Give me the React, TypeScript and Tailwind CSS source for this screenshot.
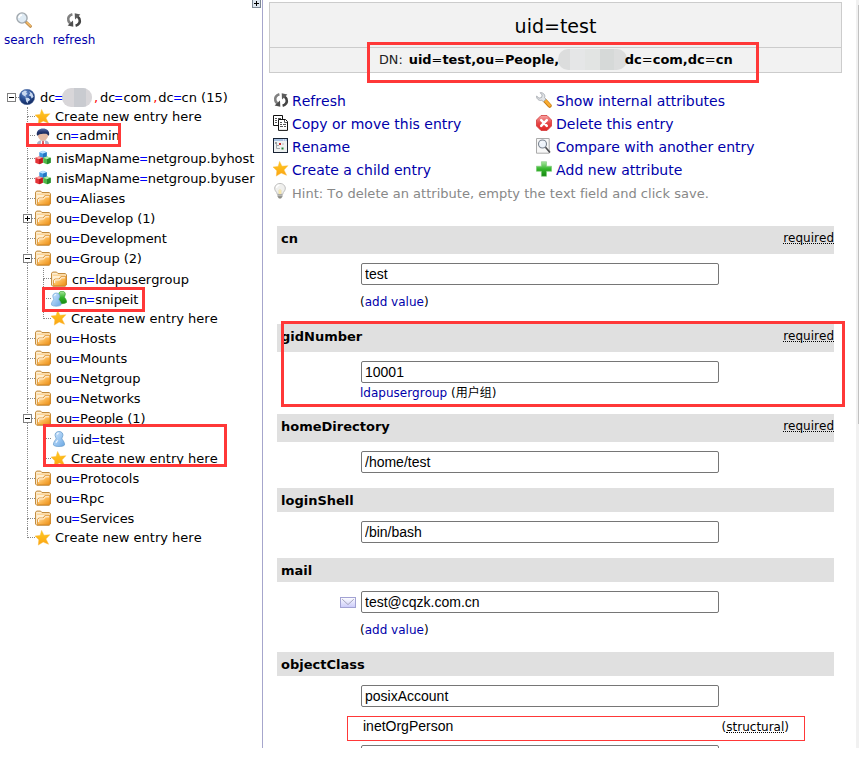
import React from "react";

const sans = "font-['DejaVu_Sans','Noto_Sans_CJK_SC',sans-serif] [font-kerning:none]";

function Svg({ children, w = 16, h = 16 }: { children: React.ReactNode; w?: number; h?: number }) {
  return (
    <svg width={w} height={h} viewBox={`0 0 ${w} ${h}`} className="block shrink-0">
      {children}
    </svg>
  );
}

function Gradients() {
  return (
    <svg width="0" height="0" className="absolute">
      <defs>
        <linearGradient id="orange" x1="0" y1="0" x2="1" y2="1">
          <stop offset="0" stopColor="#fff0d4" />
          <stop offset="0.5" stopColor="#fbb956" />
          <stop offset="1" stopColor="#ea8c12" />
        </linearGradient>
        <linearGradient id="star" x1="0" y1="0" x2="0" y2="1">
          <stop offset="0" stopColor="#ffcb20" />
          <stop offset="1" stopColor="#fba314" />
        </linearGradient>
        <radialGradient id="globe" cx="0.4" cy="0.25" r="0.8">
          <stop offset="0" stopColor="#6f93cf" />
          <stop offset="0.5" stopColor="#2a4f94" />
          <stop offset="1" stopColor="#0f2458" />
        </radialGradient>
        <linearGradient id="hair" x1="0" y1="0" x2="0" y2="1">
          <stop offset="0" stopColor="#5a6ea8" />
          <stop offset="0.5" stopColor="#24356e" />
          <stop offset="1" stopColor="#1b2750" />
        </linearGradient>
        <linearGradient id="blue" x1="0" y1="0" x2="1" y2="1">
          <stop offset="0" stopColor="#d3e9ff" />
          <stop offset="1" stopColor="#6ba8e4" />
        </linearGradient>
        <linearGradient id="green" x1="0" y1="0" x2="0" y2="1">
          <stop offset="0" stopColor="#a9e7a0" />
          <stop offset="0.5" stopColor="#35b52c" />
          <stop offset="1" stopColor="#14870f" />
        </linearGradient>
        <linearGradient id="red" x1="0" y1="0" x2="0" y2="1">
          <stop offset="0" stopColor="#f7a5a5" />
          <stop offset="0.5" stopColor="#e64848" />
          <stop offset="1" stopColor="#e02424" />
        </linearGradient>
        <linearGradient id="mail" x1="0" y1="0" x2="0" y2="1">
          <stop offset="0" stopColor="#ffffff" />
          <stop offset="1" stopColor="#c9c9fa" />
        </linearGradient>
      </defs>
    </svg>
  );
}

const StarIcon = () => (
  <Svg>
    <path d="M6.6.4 9 5.2 14.9 4.7 11 8.9 13.6 14.3 8.2 12.1 3.3 15.1 3.8 9.7 0 6 5.1 5.4Z" fill="url(#star)" stroke="#fbb32a" strokeWidth=".4" />
  </Svg>
);

const FolderIcon = () => (
  <Svg>
    <path d="M.6 14V2.2L1.6 1.1H5.6L7 2.6H14.2L15.4 3.6V14L14.2 15.2H1.7Z" fill="#fff0d4" stroke="#bd822e" />
    <path d="M2 4.2H14" stroke="#fbd190" strokeWidth="1.4" />
    <path d="M2.6 14.7V9.3L3.8 8H8.3L9.8 5.7H15.2V13.8L14 14.7Z" fill="url(#orange)" stroke="#d8871c" strokeWidth=".8" />
    <path d="M3.6 12V9.5L4.4 8.9H8.8L10.3 6.8H14.2" fill="none" stroke="#fff" strokeWidth=".9" />
  </Svg>
);

const GlobeIcon = () => (
  <Svg>
    <circle cx="8" cy="8" r="7.7" fill="url(#globe)" stroke="#49679f" strokeWidth=".5" />
    <path d="M2.7 3.6 5.8 1.5 8 2.2 7.1 3.4 8.5 4.7 6.5 6.4 7.5 8 5.2 7.1 3.2 5.4ZM6.4 8.5 9.7 8.9 11.2 10.7 9 12.5 8.7 14.5 7.2 12.6ZM10.1 2.2 13.2 4.2 14.6 7.8 12.7 9.4 11.5 7 9.7 6.4 11.2 4.5Z" fill="#c9d8ef" />
  </Svg>
);

const AdminIcon = () => (
  <Svg>
    <path d="M2 16C2 13.6 3.8 12.6 6 12.2H10C12.2 12.6 14 13.6 14 16Z" fill="#aab4c8" />
    <path d="M6 12 8 13.8 10 12 10.2 16H5.8Z" fill="#fff" />
    <path d="M7.3 13H8.7L9 16H7Z" fill="#d9464c" />
    <path d="M3 5H13C13.9 9.6 11 12.8 8 12.8S2.1 9.6 3 5Z" fill="#e6bba4" />
    <path d="M1.9 7C1 3 4.2.4 8 .4S15 3 14.1 7L13.2 7.8C12.8 6.2 11.6 5.6 9.6 5.7 7.6 6 4 5.4 2.8 7.8Z" fill="url(#hair)" />
  </Svg>
);

const CubesIcon = () => (
  <Svg>
    <path d="M4.3 2.2 8 .8 11.7 2.2V7L8 8.7 4.3 7Z" fill="#3f98df" />
    <path d="M4.3 2.2 8 3.7 11.7 2.2 8 .8Z" fill="#b8e0ff" />
    <path d="M8 3.7V8.7L11.7 7V2.2Z" fill="#2474c2" />
    <path d="M.3 7.8 4.1 6.4 7.8 7.8V12.8L4.1 14.2 .3 12.8Z" fill="#e43338" />
    <path d="M.3 7.8 4.1 9.3 7.8 7.8 4.1 6.4Z" fill="#f9a2a2" />
    <path d="M4.1 9.3V14.2L7.8 12.8V7.8Z" fill="#bc1922" />
    <path d="M8.2 7.8 12 6.4 15.7 7.8V12.8L12 14.2 8.2 12.8Z" fill="#4fb947" />
    <path d="M8.2 7.8 12 9.3 15.7 7.8 12 6.4Z" fill="#b3edaa" />
    <path d="M12 9.3V14.2L15.7 12.8V7.8Z" fill="#248a29" />
  </Svg>
);

const pawn = "M8 .5C10.8.5 12.2 2.5 11.9 4.5 11.7 6 10.8 6.7 10.9 7.7 11.1 8.7 13.6 10.4 13.6 13.9 12 16 4 16 2.4 13.9 2.4 10.4 4.9 8.7 5.1 7.7 5.2 6.7 4.3 6 4.1 4.5 3.8 2.5 5.2.5 8 .5Z";

const UserIcon = () => (
  <Svg>
    <path d={pawn} fill="url(#blue)" stroke="#6c9fcd" strokeWidth=".8" />
    <path d="M6.2 3.8Q6.2 2 8 2M5 11.8Q5.5 10.2 7 9.5" stroke="#f1f8ff" fill="none" strokeWidth="1.1" />
  </Svg>
);

const GroupIcon = () => (
  <Svg>
    <g transform="translate(4.4 -.2) scale(.83)">
      <path d={pawn} fill="url(#green)" stroke="#2a9d24" strokeWidth=".8" />
    </g>
    <g transform="translate(-1.8 1.6) scale(.88)">
      <path d={pawn} fill="url(#blue)" stroke="#73a6d5" strokeWidth=".8" />
      <path d="M6.2 3.8Q6.2 2 8 2" stroke="#fff" fill="none" />
    </g>
  </Svg>
);

const RefreshIcon = () => (
  <Svg>
    <path d="M6.4 2.3C3 3.2 1.6 5.8 2.4 8.6 2.7 9.8 3.4 10.6 4.4 11.3" fill="none" stroke="#808080" strokeWidth="2.6" />
    <path d="M1.6 13.4 7.3 14.8 7 8.6Z" fill="#4e4e4e" />
    <path d="M9.6 13.7C13 12.8 14.4 10.2 13.6 7.4 13.3 6.2 12.6 5.4 11.6 4.7" fill="none" stroke="#444" strokeWidth="2.6" />
    <path d="M14.4 2.6 8.7 1.2 9 7.4Z" fill="#5c5c5c" />
  </Svg>
);

const SearchIcon = () => (
  <Svg>
    <path d="M10.5 10.5 14.4 14.3" stroke="#b98a4c" strokeWidth="3" strokeLinecap="round" />
    <path d="M11 10.6 14.4 13.9" stroke="#f2b866" strokeWidth="1.7" strokeLinecap="round" />
    <circle cx="6" cy="6" r="5.1" fill="#dfebf4" stroke="#a1a8ae" strokeWidth="1.4" />
    <path d="M3 6Q3 3.2 6 3" fill="none" stroke="#fff" strokeWidth="1.5" />
  </Svg>
);

const CopyIcon = () => (
  <Svg>
    <path d="M.5.5H9.5V10.5H.5Z" fill="#fff" stroke="#111" />
    <path d="M2 3.5H4M5 3.5H8M2 5.5H4M2 7.5H4" stroke="#555" />
    <path d="M5.5 4.5H12.5L14.5 6.5V15.4H5.5Z" fill="#fff" stroke="#111" />
    <path d="M11.5 5V7.5H14M7 7.5H9M7 9.5H9M10 9.5H13M7 11.5H10M11 11.5H13" stroke="#555" fill="none" />
  </Svg>
);

const RenameIcon = () => (
  <Svg>
    <g transform="translate(-1 0)">
      <rect x=".5" y=".5" width="15" height="14" fill="#eef1f1" stroke="#172233" />
      <path d="M1 2H15" stroke="#a9c3e4" strokeWidth="2" />
      <path d="M11 2H12M13 2H14" stroke="#fff" />
      <path d="M4.5 5V10.5H8M4.5 7.5H7" fill="none" stroke="#a5a9ac" />
      <rect x="3" y="4" width="2" height="2" fill="#999fa3" />
      <rect x="7" y="5" width="2" height="2" fill="#c83030" />
      <rect x="9.5" y="9.5" width="2" height="2" fill="#27883c" />
      <path d="M10 6H12" stroke="#bbb" />
      <path d="M1.5 1V14" stroke="#172233" />
    </g>
  </Svg>
);

const BulbIcon = () => (
  <Svg>
    <g transform="translate(-1 0)">
      <path d="M5.2 11.3Q5.1 9.6 3.4 7.8C1.2 4.2 4.3.4 8 .4S14.8 4.2 12.6 7.8Q10.9 9.6 10.8 11.3Z" fill="#efefed" stroke="#b0b0b0" strokeWidth=".8" />
      <path d="M7 11V7.5L8 6.5 9 7.5V11" fill="#fff2bb" stroke="#e1cf8a" strokeWidth=".6" />
      <path d="M5.6 11.5H10.4V13.8L9 15.5H7L5.6 13.8Z" fill="#8c8c86" />
      <path d="M6 12.7H10" stroke="#ddd" strokeWidth=".7" />
      <path d="M4.5 5Q4.7 2.5 7.5 2.2" stroke="#fff" fill="none" strokeWidth="1.3" />
    </g>
  </Svg>
);

const WrenchIcon = () => (
  <Svg>
    <path d="M9.2 8.9 13.6 13.7" stroke="#c67a13" strokeWidth="4.2" strokeLinecap="round" />
    <path d="M9.3 8.7 13.6 13.3" stroke="#f9ad32" strokeWidth="2.7" strokeLinecap="round" />
    <path d="M4.2.7C7 .2 9.6 2.8 8.6 5.6L10 7.2 7.4 9.7 5.7 8.3C3.1 9.1.4 7 .6 4.1L3 6.2 5.6 5.5 6.2 3Z" fill="#e3e5e8" stroke="#9a9fa6" strokeWidth=".8" />
  </Svg>
);

const DeleteIcon = () => (
  <Svg>
    <path d="M5 .5H11L15.5 5V11L11 15.5H5L.5 11V5Z" fill="url(#red)" stroke="#d43a3a" strokeWidth=".8" />
    <path d="M5.2 5.2 10.8 10.8M10.8 5.2 5.2 10.8" stroke="#fff" strokeWidth="2.5" strokeLinecap="round" />
  </Svg>
);

const CompareIcon = () => (
  <Svg>
    <path d="M.5.5H13.2V15.2H.5Z" fill="#f7f7f7" stroke="#aaa" />
    <circle cx="6.5" cy="6" r="4" fill="#eef3fb" stroke="#7b8490" strokeWidth="1.1" />
    <path d="M9.5 9.3 14 14.5" stroke="#4c4c50" strokeWidth="1.7" />
    <path d="M4.4 5.5Q5 4 6.5 4" stroke="#fff" fill="none" />
  </Svg>
);

const PlusIcon = () => (
  <Svg>
    <path d="M5.4.7H10.5V5.2H15.6V10.3H10.5V15.3H5.4V10.3H.4V5.2H5.4Z" fill="url(#green)" stroke="#7cc978" strokeWidth=".6" />
  </Svg>
);

const MailIcon = () => (
  <Svg w={16} h={11}>
    <rect x=".5" y=".5" width="15" height="10" fill="url(#mail)" stroke="#a2a2d3" />
    <path d="M2.2 2.2 8 7.6 13.8 2.2" fill="none" stroke="#a5a5bd" />
    <path d="M2.5 9 5.5 6.7M13.5 9 10.5 6.7" stroke="#dadaf7" />
  </Svg>
);

function Toggle({ open }: { open: boolean }) {
  return (
    <svg width="9" height="9" viewBox="0 0 9 9" className="block" shapeRendering="crispEdges">
      <rect x=".5" y=".5" width="8" height="8" fill="#fff" stroke="#808080" />
      <path d={open ? "M2 4.5H7" : "M2 4.5H7M4.5 2V7"} stroke="#000" />
    </svg>
  );
}

function Eq({ text }: { text: string }) {
  const [a, b] = text.split("=");
  if (b === undefined) return <>{text}</>;
  return (
    <>
      {a}
      <span className="-ml-px inline-block w-[9px] origin-left scale-x-[.84] text-[#0000ff]">=</span>
      {b}
    </>
  );
}

type Row = { label: string; icon: () => React.ReactElement; cls: string; level?: number; toggle?: "open" | "closed"; last?: boolean; lastInner?: boolean };

const NEW = "Create new entry here";
const rows: Row[] = [
  { label: NEW, icon: StarIcon, cls: "h-[19px]" },
  { label: "cn=admin", icon: AdminIcon, cls: "h-[22px] pb-[3px]" },
  { label: "nisMapName=netgroup.byhost", icon: CubesIcon, cls: "h-5" },
  { label: "nisMapName=netgroup.byuser", icon: CubesIcon, cls: "h-5" },
  { label: "ou=Aliases", icon: FolderIcon, cls: "h-5" },
  { label: "ou=Develop (1)", icon: FolderIcon, cls: "h-5", toggle: "closed" },
  { label: "ou=Development", icon: FolderIcon, cls: "h-5" },
  { label: "ou=Group (2)", icon: FolderIcon, cls: "h-5", toggle: "open" },
  { label: "cn=ldapusergroup", icon: FolderIcon, cls: "h-[21px]", level: 2 },
  { label: "cn=snipeit", icon: GroupIcon, cls: "h-[19px]", level: 2 },
  { label: NEW, icon: StarIcon, cls: "h-5", level: 2, lastInner: true },
  { label: "ou=Hosts", icon: FolderIcon, cls: "h-5" },
  { label: "ou=Mounts", icon: FolderIcon, cls: "h-5" },
  { label: "ou=Netgroup", icon: FolderIcon, cls: "h-5" },
  { label: "ou=Networks", icon: FolderIcon, cls: "h-5" },
  { label: "ou=People (1)", icon: FolderIcon, cls: "h-5", toggle: "open" },
  { label: "uid=test", icon: UserIcon, cls: "h-[21px]", level: 2 },
  { label: NEW, icon: StarIcon, cls: "h-[19px]", level: 2, lastInner: true },
  { label: "ou=Protocols", icon: FolderIcon, cls: "h-5" },
  { label: "ou=Rpc", icon: FolderIcon, cls: "h-5" },
  { label: "ou=Services", icon: FolderIcon, cls: "h-5" },
  { label: NEW, icon: StarIcon, cls: "h-[19px]", last: true },
];

function Branch({ half }: { half?: boolean }) {
  return (
    <span className="flex w-2 shrink-0 flex-col self-stretch">
      <span className="w-full flex-1 border-b border-l border-dotted border-[#888]" />
      <span className={half ? "flex-1" : "flex-1 border-l border-dotted border-[#888]"} />
    </span>
  );
}

function TreeRow({ row }: { row: Row }) {
  const Icon = row.icon;
  const isNew = row.label === NEW;
  const lower = isNew ? row.cls === "h-5" : row.icon !== AdminIcon;
  return (
    <div className={`relative flex items-center pl-[27px] ${row.cls}`}>
      {row.level === 2 && <span className="w-4 shrink-0 self-stretch border-l border-dotted border-[#888]" />}
      <Branch half={row.last || row.lastInner} />
      {row.toggle && (
        <span className="absolute top-[6px] left-[23px]">
          <Toggle open={row.toggle === "open"} />
        </span>
      )}
      <Icon />
      <span className={`whitespace-nowrap ${isNew ? "ml-1" : "ml-[5px] tracking-[-0.07px]"} ${lower ? "pt-[2px]" : ""}`}>
        <Eq text={row.label} />
      </span>
    </div>
  );
}

function Sidebar() {
  return (
    <aside className="relative h-[748px] w-[263px] shrink-0 border-r border-[#a6a6cc] text-[13px] leading-4 text-black">
      <div className="absolute -top-px right-[1px] flex size-[9px] items-center justify-center border border-[#7c8794] bg-[#dde6ef]">
        <svg width="5" height="5" viewBox="0 0 5 5" shapeRendering="crispEdges">
          <path d="M0 2.5H5M2.5 0V5" stroke="#000" />
        </svg>
      </div>
      <nav className="flex h-[87px] gap-[9px] pt-3 pl-1 text-[12px] text-[#0000aa]">
        <div className="flex w-10 flex-col items-center gap-1">
          <SearchIcon />
          <span>search</span>
        </div>
        <div className="flex w-[42px] flex-col items-center gap-1">
          <RefreshIcon />
          <span>refresh</span>
        </div>
      </nav>
      <div className="flex h-5 items-center pl-[7px]">
        <Toggle open />
        <span className="w-[3px] border-t border-dotted border-[#888]" />
        <GlobeIcon />
        <span className="ml-[5px] w-[22px] pt-px whitespace-nowrap"><Eq text="dc=" /></span>
        <span className="mr-[2px] flex h-[19px] w-[30px] overflow-hidden rounded-[9px] bg-[#d8d6d9]">
          <span className="ml-3 w-3 bg-[#c9cbd0]" />
        </span>
        <span className="w-[6px] pt-px text-[#ff0000]">,</span>
        <span className="pt-px whitespace-nowrap"><Eq text="dc=com" /></span>
        <span className="w-[7px] pt-px pl-[2px] text-[#ff0000]">,</span>
        <span className="pt-px whitespace-nowrap"><Eq text="dc=cn (15)" /></span>
      </div>
      {rows.map((r, i) => (
        <TreeRow key={i} row={r} />
      ))}
    </aside>
  );
}

function Action({ icon: Icon, label }: { icon: () => React.ReactElement; label: string }) {
  return (
    <div className="flex h-[23px] items-center gap-[3px] text-[14px] whitespace-nowrap text-[#0000aa]">
      <span className="-mt-[3px]"><Icon /></span>
      {label}
    </div>
  );
}

function AttrHeader({ name, required }: { name: string; required?: boolean }) {
  return (
    <div className={`flex w-[557px] justify-between bg-[#e0e0e0] pl-1 leading-6 ${required ? "h-7" : "h-6"}`}>
      <span className="pt-px text-[13px] font-bold">{name}</span>
      {required && (
        <span className="mt-1 h-[14px] border-b border-dotted border-black text-[12px] leading-4">required</span>
      )}
    </div>
  );
}

function Field({ value }: { value: string }) {
  return (
    <input
      readOnly
      value={value}
      className="block h-[22px] w-[358px] rounded-[2px] border border-[#767676] bg-white px-[3px] font-['Liberation_Sans',Arial,sans-serif] text-[14px] text-black outline-none"
    />
  );
}

function AddValue() {
  return (
    <div className="pl-[83px] text-[12px] leading-4 text-black">
      (<span className="text-[#0000aa]">add value</span>)
    </div>
  );
}

function BoldDn({ text }: { text: string }) {
  return (
    <>
      {text.split("=").map((part, i) => (
        <React.Fragment key={i}>
          {i > 0 && <span className="font-normal">=</span>}
          {part}
        </React.Fragment>
      ))}
    </>
  );
}

function Entry() {
  return (
    <main className="h-[748px] w-[593px] overflow-hidden pt-[2px] pl-[6px]">
      <header className="h-[71px] w-[573px] border border-[#ccc] bg-[#f2f2f2]">
        <h1 className="flex h-11 items-center justify-center pt-[2px] text-[19px]">uid=test</h1>
        <div className="flex h-[25px] items-center border-t border-[#ccc] pl-[109px] text-[13px] whitespace-nowrap">
          <span className="mr-[6px] text-[12.8px] text-[#222]">DN:</span>
          <b className="w-[149px] text-[12.9px]"><BoldDn text="uid=test,ou=People," /></b>
          <span className="-mt-px flex h-[21px] w-[69px] overflow-hidden rounded-[10px] bg-[#dcdddd]">
            <span className="ml-3 w-[15px] bg-[#e5e6e7]" />
            <span className="w-[15px] bg-[#e2e4e3]" />
            <span className="w-[14px] bg-[#d6d9d8]" />
          </span>
          <b className="-ml-[2px] text-[13px]"><BoldDn text="dc=com,dc=cn" /></b>
        </div>
      </header>
      <section className="flex pt-[17px] pl-1">
        <div className="w-[263px]">
          <Action icon={RefreshIcon} label="Refresh" />
          <Action icon={CopyIcon} label="Copy or move this entry" />
          <Action icon={RenameIcon} label="Rename" />
          <Action icon={StarIcon} label="Create a child entry" />
        </div>
        <div className="[&>div]:gap-1">
          <Action icon={WrenchIcon} label="Show internal attributes" />
          <Action icon={DeleteIcon} label="Delete this entry" />
          <Action icon={CompareIcon} label="Compare with another entry" />
          <Action icon={PlusIcon} label="Add new attribute" />
        </div>
      </section>
      <div className="flex h-[23px] items-center gap-[3px] pl-1 text-[13px] tracking-[0.02px] whitespace-nowrap text-[#888]">
        <span className="-mt-[5px]"><BulbIcon /></span>
        Hint: To delete an attribute, empty the text field and click save.
      </div>
      <section className="pt-[21px] pl-2">
        <div className="h-[98px]">
          <AttrHeader name="cn" required />
          <div className="pt-[9px] pb-[9px] pl-[84px]"><Field value="test" /></div>
          <AddValue />
        </div>
        <div className="h-[90px]">
          <AttrHeader name="gidNumber" required />
          <div className="pt-[9px] pb-[2px] pl-[84px]"><Field value="10001" /></div>
          <div className="pl-[83px] text-[12px] leading-4">
            <span className="text-[#0000aa]">ldapusergroup</span> (用户组)
          </div>
        </div>
        <div className="h-[74px]">
          <AttrHeader name="homeDirectory" required />
          <div className="pt-[9px] pl-[84px]"><Field value="/home/test" /></div>
        </div>
        <div className="h-[70px]">
          <AttrHeader name="loginShell" />
          <div className="pt-[9px] pl-[84px]"><Field value="/bin/bash" /></div>
        </div>
        <div className="h-[94px]">
          <AttrHeader name="mail" />
          <div className="flex items-center gap-[5px] pt-[9px] pb-[9px] pl-[63px]">
            <MailIcon />
            <Field value="test@cqzk.com.cn" />
          </div>
          <AddValue />
        </div>
        <div>
          <AttrHeader name="objectClass" />
          <div className="pt-[9px] pb-[9px] pl-[84px]"><Field value="posixAccount" /></div>
          <div className="ml-[70px] flex h-[25px] w-[458px] justify-between border border-[#ff3838] pr-[15px] pl-[15px]">
            <span className="pt-px font-['Liberation_Sans',Arial,sans-serif] text-[14px] leading-4">inetOrgPerson</span>
            <span className="flex pt-[2px] text-[12px] leading-4">
              (<span className="h-[14px] border-b border-dotted border-black">structural</span>)
            </span>
          </div>
          <div className="pt-1 pl-[84px]"><Field value="" /></div>
        </div>
      </section>
    </main>
  );
}

const marks = [
  "left-[367px] top-[42px] w-[392px] h-[41px]",
  "left-[281px] top-[321px] w-[564px] h-[86px]",
  "left-[26px] top-[123px] w-[95px] h-[24px]",
  "left-[42px] top-[287px] w-[103px] h-[25px]",
  "left-[43px] top-[424px] w-[184px] h-[43px]",
];

export default function App() {
  return (
    <div className={`relative h-[761px] w-[859px] overflow-hidden bg-white text-black ${sans}`}>
      <Gradients />
      <div className="flex h-[748px] overflow-hidden">
        <Sidebar />
        <Entry />
        <div className="w-[3px] shrink-0 bg-[#f1f1f1] pt-[5px] pl-[2px]">
          <div className="h-[419px] bg-[#c1c1c1]" />
        </div>
      </div>
      {marks.map((m) => (
        <div key={m} className={`pointer-events-none absolute border-[3px] border-[#ff3838] ${m}`} />
      ))}
    </div>
  );
}
